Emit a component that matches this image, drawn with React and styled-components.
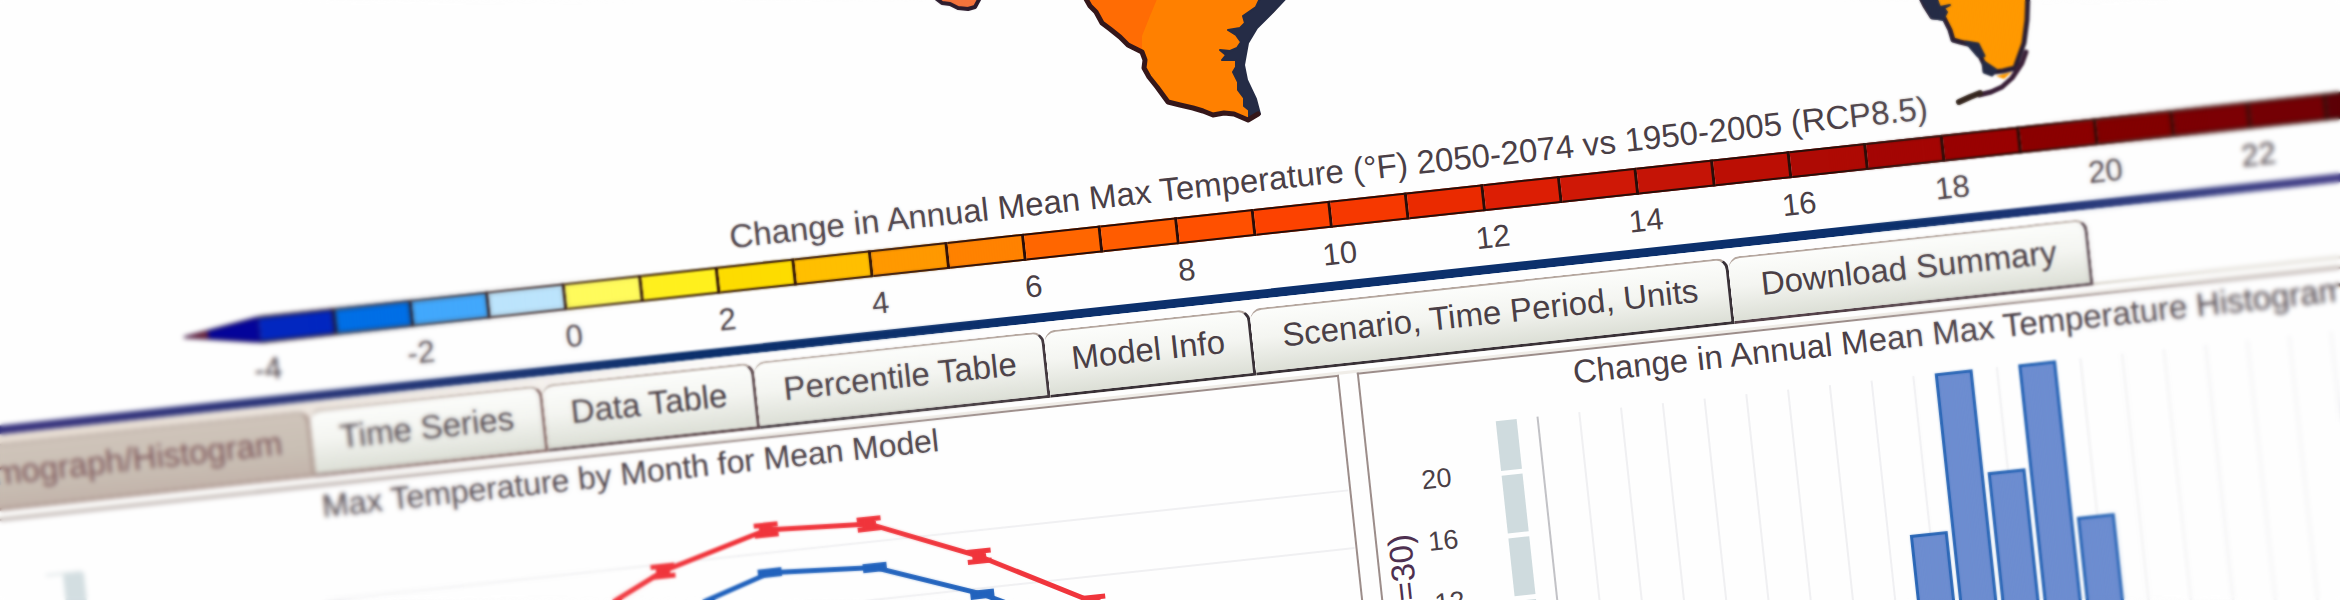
import React from "react";
import styled, { createGlobalStyle } from "styled-components";

const Global = createGlobalStyle`
  body { margin: 0; background: #fefefe; }
  * { box-sizing: border-box; }
`;

const TILT = 6.15;

const Page = styled.main`
  position: relative;
  height: 100vh;
  overflow: hidden;
  background: #fefefe;
  font-family: "Liberation Sans", Arial, sans-serif;
  color: #4a3f46;
`;

const Screen = styled.div`
  display: flex;
  flex-direction: column;
  width: calc(100% + 180px);
  margin-left: -140px;
  transform: rotate(-${TILT}deg);
  transform-origin: 140px 0;
`;

const MapArea = styled.svg`
  display: block;
  width: 100%;
  height: 294px;
  padding-left: 140px;
  overflow: visible;
`;

const Legend = styled.section`
  display: flex;
  flex-direction: column;
`;

const LegendTitle = styled.h2`
  margin: 0;
  padding-left: 840px;
  font-size: 33px;
  line-height: 40px;
  font-weight: 400;
  white-space: nowrap;
`;

const Scale = styled.div`
  display: flex;
  margin-top: 8px;
  padding-left: 285px;
`;

const Arrow = styled.svg`
  flex: none;
  width: 78px;
  height: 27px;
`;

const Swatch = styled.div`
  flex: none;
  width: 77px;
  height: 27px;
  background: ${(p) => p.$color};
  border: solid #2a0d08;
  border-width: 2px 3px 2px 0;
`;

const Ticks = styled.div`
  display: flex;
  margin-top: 10px;
  padding-left: 290px;
  font-size: 31px;
  line-height: 34px;
`;

const Tick = styled.span`
  flex: none;
  width: 154px;
  text-align: center;
`;

const Divider = styled.hr`
  width: 100%;
  height: 9px;
  margin: 10px 0 0;
  border: 0;
  background: linear-gradient(90deg, #35317c 140px, #0c306c 760px, #0c306c 2000px, #453f88 2450px);
`;

const TabStrip = styled.nav`
  display: flex;
  padding-top: 9px;
  background: linear-gradient(90deg, #e6dcd2 200px, #fefefe 900px);
  border-bottom: 3px solid #dedad2;
`;

const Tab = styled.button`
  flex: none;
  width: ${(p) => p.$width}px;
  height: 67px;
  margin: 0 0 -3px;
  padding: 0 0 7px;
  border: solid;
  border-width: 2px 3px 3px 0;
  border-color: #b5a79f ${(p) => p.$edge} ${(p) => p.$edge} #b5a79f;
  border-radius: 12px 12px 0 0;
  background: ${(p) =>
    p.$active
      ? "linear-gradient(#cfc4ba, #c9bfb4 60%, #c3b4ab)"
      : "linear-gradient(#fcfdfb, #f4f5f1 45%, #dcdfd6)"};
  color: ${(p) => (p.$active ? "#7c5659" : "#4a3f46")};
  font: 400 33px/40px "Liberation Sans", Arial, sans-serif;
  text-align: ${(p) => (p.$active ? "right" : "center")};
  padding-right: ${(p) => (p.$active ? "27px" : "0")};
  white-space: nowrap;
`;

const Panels = styled.div`
  display: flex;
  gap: 18px;
  margin-top: 5px;
  border-top: 3px solid #f0ede8;
`;

const Panel = styled.section`
  flex: ${(p) => (p.$fill ? "1 1 0" : "0 0 1431px")};
  min-height: 344px;
  border: 2px solid #9c8d8a;
  border-bottom: 0;
`;

const PanelTitle = styled.h3`
  margin: 0;
  padding-left: ${(p) => p.$indent}px;
  font-size: ${(p) => p.$size}px;
  line-height: 41px;
  font-weight: 400;
  white-space: nowrap;
`;

const Chart = styled.svg`
  display: block;
  flex: 1;
  width: 100%;
  height: 300px;
`;

const ChartRow = styled.div`
  display: flex;
`;

const AxisTitle = styled.div`
  width: 48px;
  margin-top: 122px;
  writing-mode: vertical-rl;
  transform: rotate(180deg);
  text-align: right;
  font-size: 33px;
  line-height: 46px;
  color: #4e3050;
`;

const AxisTicks = styled.div`
  display: flex;
  flex-direction: column;
  width: 36px;
  padding-top: 40px;
  text-align: center;
  font-size: 27px;
  line-height: 62px;
`;

const FocusFalloff = styled.div`
  position: absolute;
  inset: 0;
  pointer-events: none;
  backdrop-filter: blur(${(p) => p.$radius}px);
  mask-image: linear-gradient(
    84deg,
    #000 ${(p) => p.$left[0]}%,
    transparent ${(p) => p.$left[1]}%,
    transparent ${(p) => p.$right[0]}%,
    #000 ${(p) => p.$right[1]}%
  );
`;

const swatches = [
  "#0227c0", "#006fe6", "#42a8fc", "#bce4fc", "#fffb5c", "#fff01e", "#fddc00",
  "#ffbf00", "#ff9900", "#ff8200", "#ff6600", "#ff5c00", "#ff5000", "#fc4200",
  "#f63800", "#ea2a00", "#dc1e04", "#cf1806", "#c51406", "#bb0e04", "#ae0a04",
  "#a40604", "#990202", "#8b0000", "#820000", "#7c0004", "#740004", "#5c0006",
];

const ticks = ["-4", "-2", "0", "2", "4", "6", "8", "10", "12", "14", "16", "18", "20", "22"];

const tabs = [
  { label: "Climograph/Histogram", width: 403, edge: "#a08880", active: true },
  { label: "Time Series", width: 234, edge: "#80625f" },
  { label: "Data Table", width: 213, edge: "#5c484c" },
  { label: "Percentile Table", width: 292, edge: "#443a40" },
  { label: "Model Info", width: 207, edge: "#3a3238" },
  { label: "Scenario, Time Period, Units", width: 481, edge: "#3a3238" },
  { label: "Download Summary", width: 361, edge: "#54424a" },
];

const warm = [[491, 690], [598, 639], [705, 609], [808, 614], [914, 658], [1023, 716]];
const cool = [[590, 688], [704, 652], [809, 658], [913, 696], [1023, 750]];
const bars = [[1842, 737], [1884, 579], [1926, 683], [1968, 579], [2010, 737]];
const gridX = Array.from({ length: 20 }, (_, i) => 1526 + i * 42);

const line = (pts) => pts.map((p) => p.join(",")).join(" ");

function Regions() {
  return (
    <MapArea aria-hidden="true">
      <g transform={`rotate(${TILT})`} strokeLinejoin="round" strokeLinecap="round">
        <path d="M933-4 942 3 950 4 958 8 968 9 975 7 981-4Z" fill="#f5733c" stroke="#2b1a2c" strokeWidth="4" />
        <path
          d="M1082-8 1090 6 1096 12 1102 23 1110 29 1120 37 1128 45 1142 52 1145 60 1144 68 1149 77 1157 87 1168 102 1180 105 1193 108 1203 111 1213 115 1224 113 1234 114 1248 120 1256 114 1260 113 1255 98 1246 78 1244 62 1248 42 1258 26 1274 12 1288-6Z"
          fill="#ff8000"
        />
        <path d="M1080-8 1102 23 1120 37 1142 52 1142 36 1150 16 1160-8Z" fill="#ff6c04" />
        <path
          d="M1262-6 1256 7 1243 16 1245 23 1240 28 1228 30 1236 35 1241 42 1237 48 1230 51 1220 50 1226 55 1222 60 1236 60 1236 67 1233 72 1238 82 1238 90 1244 98 1244 106 1249 110 1249 120 1260 114 1256 99 1247 80 1244 65 1248 43 1257 28 1273 12 1290-6Z"
          fill="#252c46"
          stroke="#252c46"
          strokeWidth="2"
        />
        <path
          d="M1082-8 1090 6 1096 12 1102 23 1110 29 1120 37 1128 45 1142 52 1145 60 1144 68 1149 77 1157 87 1168 102 1180 105 1193 108 1203 111 1213 115 1224 113 1234 114 1248 120 1258 114"
          fill="none"
          stroke="#35171a"
          strokeWidth="5"
        />
        <path
          d="M1918-8 1925 6 1932 17 1944 18 1950 30 1953 40 1960 42 1972 45 1979 54 1984 64 1985 70 1994 72 2003 71 2015 68 2020 54 2024 43 2027 20 2028-8Z"
          fill="#ff9900"
          stroke="#2b2034"
          strokeWidth="5"
        />
        <path d="M1918-8 1932 18 1943 20 1947 12 1944 8 1950 5 1940 7 1934-8Z" fill="#252c46" stroke="#252c46" strokeWidth="2" />
        <path d="M1966 42 1978 44 1984 56 1978 56ZM1984 62 1996 70 1992 75 1984 72Z" fill="#252c46" stroke="#252c46" strokeWidth="3" />
        <path d="M1996 76 2012 72 2004 79Z" fill="#ff9900" />
        <path d="M2026 52 2022 63 2012 78 2002 87 1991 92 1979 95" fill="none" stroke="#3a2038" strokeWidth="5" />
        <path d="M1980 93 1970 97 1959 102" fill="none" stroke="#35261e" strokeWidth="6" />
      </g>
    </MapArea>
  );
}

function MonthlyChart() {
  return (
    <Chart viewBox="-138 559 1427 300" preserveAspectRatio="xMinYMin slice" role="img" aria-label="Max temperature by month">
      <path d="M250 632H1288M250 690H1288M250 748H1288" stroke="#f0f0f2" strokeWidth="2" />
      <path d="M-16 577H20" stroke="#dde4e6" strokeWidth="2" />
      <rect x="1" y="578" width="21" height="50" fill="#d3dee1" />
      <rect x="1" y="633" width="21" height="58" fill="#d3dee1" />
      <g stroke="#f0353c" fill="none">
        <polyline points={line(warm)} strokeWidth="5" />
        {warm.map(([x, y]) => (
          <path key={x} d={`M${x - 12} ${y - 5}h24M${x - 12} ${y + 5}h24M${x - 7} ${y}h14`} strokeWidth="5" />
        ))}
      </g>
      <g stroke="#2263bd" fill="none">
        <polyline points={line(cool)} strokeWidth="5" />
        {cool.map(([x, y]) => (
          <path key={x} d={`M${x - 12} ${y}h24`} strokeWidth="9" />
        ))}
      </g>
    </Chart>
  );
}

function HistogramChart() {
  return (
    <Chart role="img" aria-label="Temperature change histogram">
      <g transform="translate(-1395 -559)">
        {[[579, 50], [634, 58], [697, 58], [760, 58]].map(([y, h]) => (
          <rect key={y} x="1442" y={y} width="21" height={h} fill="#cfdbde" />
        ))}
        <path d="M1484 579V860" stroke="#c2c2c6" strokeWidth="2" />
        {gridX.map((x) => (
          <path key={x} d={`M${x} 579V860`} stroke="#f0f0f2" strokeWidth="2" />
        ))}
        {bars.map(([x, y]) => (
          <rect key={x} x={x + 1} y={y + 1} width="35" height="280" fill="#6d8dd0" stroke="#2563b4" strokeWidth="3" />
        ))}
      </g>
    </Chart>
  );
}

export default function App() {
  return (
    <Page>
      <Global />
      <Screen>
        <Regions />
        <Legend>
          <LegendTitle>Change in Annual Mean Max Temperature (°F) 2050-2074 vs 1950-2005 (RCP8.5)</LegendTitle>
          <Scale>
            <Arrow viewBox="0 0 78 27" aria-hidden="true">
              <path d="M2 13 78 1V26Z" fill="#04049a" stroke="#1a0a50" strokeWidth="2" />
              <path d="M0 13 26 9V17Z" fill="#6b2338" />
            </Arrow>
            {swatches.map((color) => (
              <Swatch key={color} $color={color} />
            ))}
          </Scale>
          <Ticks>
            {ticks.map((t) => (
              <Tick key={t}>{t}</Tick>
            ))}
          </Ticks>
        </Legend>
        <Divider />
        <TabStrip>
          {tabs.map((t) => (
            <Tab key={t.label} type="button" $width={t.width} $edge={t.edge} $active={t.active}>
              {t.label}
            </Tab>
          ))}
        </TabStrip>
        <Panels>
          <Panel>
            <PanelTitle $indent={404} $size={32}>Max Temperature by Month for Mean Model</PanelTitle>
            <MonthlyChart />
          </Panel>
          <Panel $fill>
            <PanelTitle $indent={213} $size={33}>Change in Annual Mean Max Temperature Histogram</PanelTitle>
            <ChartRow>
              <AxisTitle>(N=30)</AxisTitle>
              <AxisTicks>
                <span>20</span>
                <span>16</span>
                <span>12</span>
              </AxisTicks>
              <HistogramChart />
            </ChartRow>
          </Panel>
        </Panels>
      </Screen>
      <FocusFalloff $radius={1} $left={[30, 44]} $right={[78, 86]} />
      <FocusFalloff $radius={2} $left={[14, 30]} $right={[86, 94]} />
    </Page>
  );
}
